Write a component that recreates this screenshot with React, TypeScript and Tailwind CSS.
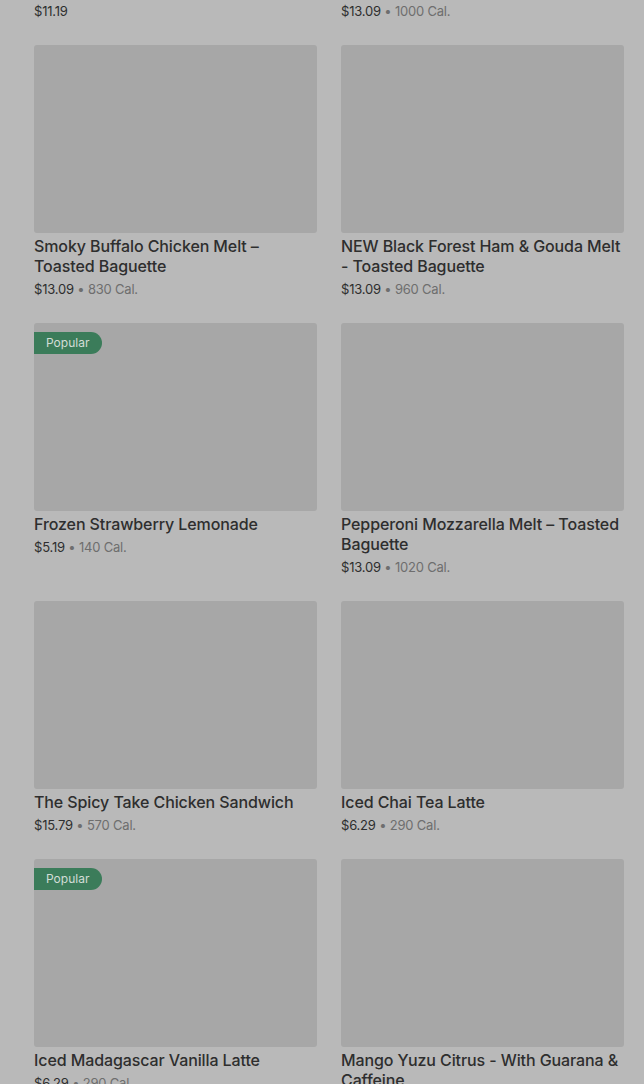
const items = [
    { title: "Smoky Buffalo Chicken Melt – Toasted Baguette", price: "$13.09", cal: "830 Cal." },
    { title: "NEW Black Forest Ham & Gouda Melt - Toasted Baguette", price: "$13.09", cal: "960 Cal." },
    { title: "Frozen Strawberry Lemonade", price: "$5.19", cal: "140 Cal.", popular: true },
    { title: "Pepperoni Mozzarella Melt – Toasted Baguette", price: "$13.09", cal: "1020 Cal." },
    { title: "The Spicy Take Chicken Sandwich", price: "$15.79", cal: "570 Cal." },
    { title: "Iced Chai Tea Latte", price: "$6.29", cal: "290 Cal." },
    { title: "Iced Madagascar Vanilla Latte", price: "$6.29", cal: "290 Cal.", popular: true },
    { title: "Mango Yuzu Citrus - With Guarana & Caffeine", price: "$6.29", cal: "90 Cal." },
]

const PriceLine = ({ price, cal }: { price: string; cal?: string }) => (
    <div className="text-[13px] leading-5 tracking-[-0.2px]">
        <span className="text-[#2e2e2e]">{price}</span>
        {cal && (
            <>
                <span className="text-[#6e6e6e]"> • </span>
                <span className="text-[#6e6e6e]">{cal}</span>
            </>
        )}
    </div>
)

export default function App() {
    return (
        <div
            className="h-[1084px] overflow-hidden bg-[#b9b9b9] pl-[34px] pr-[20px] pt-px"
            style={{ fontFamily: "Inter, 'Liberation Sans', sans-serif" }}
        >
            <div className="grid grid-cols-2 gap-x-6 gap-y-6">
                <PriceLine price="$11.19" />
                <PriceLine price="$13.09" cal="1000 Cal." />
                {items.map((item) => (
                    <div key={item.title} className="flex flex-col">
                        <div className="relative h-[188px] rounded-[3px] bg-[#a7a7a7]">
                            {item.popular && (
                                <div className="absolute left-0 top-[9px] flex h-[22px] items-center rounded-r-full bg-[#3b7c5a] pl-3 pr-[13px] text-[12px] text-[#d3ddd7]">
                                    Popular
                                </div>
                            )}
                        </div>
                        <div className="mt-[3px] text-[16px] font-medium leading-5 tracking-[-0.1px] text-[#2e2e2e]">
                            {item.title}
                        </div>
                        <div className="mt-[3px]">
                            <PriceLine price={item.price} cal={item.cal} />
                        </div>
                    </div>
                ))}
            </div>
        </div>
    )
}
